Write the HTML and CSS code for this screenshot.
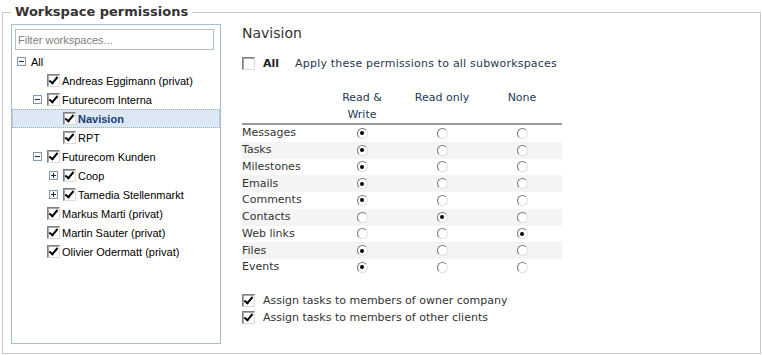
FILE: index.html
```html
<!DOCTYPE html>
<html lang="en">
<head>
  <meta charset="UTF-8">
  <meta name="viewport" content="width=device-width, initial-scale=1.0">
  <title>Workspace permissions</title>
  <link rel="stylesheet" href="styles.css">
</head>
<body>
  <fieldset class="permissions">
    <legend>Workspace permissions</legend>
    <div class="layout">
      <div class="tree-panel">
        <input type="text" class="filter" placeholder="Filter workspaces...">
        <div class="tree">
          <div class="node level-0">
            <svg class="toggle" viewBox="0 0 9 9"><rect x=".5" y=".5" width="8" height="8"/><path d="M2 4.5h5"/></svg>
            <span class="node-label">All</span>
          </div>
          <div class="node level-1">
            <span class="toggle-space"></span><span class="check on"></span>
            <span class="node-label">Andreas Eggimann (privat)</span>
          </div>
          <div class="node level-1">
            <svg class="toggle" viewBox="0 0 9 9"><rect x=".5" y=".5" width="8" height="8"/><path d="M2 4.5h5"/></svg>
            <span class="check on"></span>
            <span class="node-label">Futurecom Interna</span>
          </div>
          <div class="node level-2 selected">
            <span class="toggle-space"></span><span class="check on"></span>
            <span class="node-label">Navision</span>
          </div>
          <div class="node level-2">
            <span class="toggle-space"></span><span class="check on"></span>
            <span class="node-label">RPT</span>
          </div>
          <div class="node level-1">
            <svg class="toggle" viewBox="0 0 9 9"><rect x=".5" y=".5" width="8" height="8"/><path d="M2 4.5h5"/></svg>
            <span class="check on"></span>
            <span class="node-label">Futurecom Kunden</span>
          </div>
          <div class="node level-2">
            <svg class="toggle" viewBox="0 0 9 9"><rect x=".5" y=".5" width="8" height="8"/><path d="M2 4.5h5M4.5 2v5"/></svg>
            <span class="check on"></span>
            <span class="node-label">Coop</span>
          </div>
          <div class="node level-2">
            <svg class="toggle" viewBox="0 0 9 9"><rect x=".5" y=".5" width="8" height="8"/><path d="M2 4.5h5M4.5 2v5"/></svg>
            <span class="check on"></span>
            <span class="node-label">Tamedia Stellenmarkt</span>
          </div>
          <div class="node level-1">
            <span class="toggle-space"></span><span class="check on"></span>
            <span class="node-label">Markus Marti (privat)</span>
          </div>
          <div class="node level-1">
            <span class="toggle-space"></span><span class="check on"></span>
            <span class="node-label">Martin Sauter (privat)</span>
          </div>
          <div class="node level-1">
            <span class="toggle-space"></span><span class="check on"></span>
            <span class="node-label">Olivier Odermatt (privat)</span>
          </div>
        </div>
      </div>

      <div class="detail">
        <h2>Navision</h2>
        <div class="all-row">
          <span class="check"></span>
          <span class="all-label">All</span>
          <span class="apply-label">Apply these permissions to all subworkspaces</span>
        </div>

        <table class="perm-table">
          <thead>
            <tr>
              <th class="label-col"></th>
              <th>Read &amp;<br>Write</th>
              <th>Read only</th>
              <th>None</th>
            </tr>
          </thead>
          <tbody>
            <tr><td>Messages</td><td><span class="radio on"></span></td><td><span class="radio"></span></td><td><span class="radio"></span></td></tr>
            <tr><td>Tasks</td><td><span class="radio on"></span></td><td><span class="radio"></span></td><td><span class="radio"></span></td></tr>
            <tr><td>Milestones</td><td><span class="radio on"></span></td><td><span class="radio"></span></td><td><span class="radio"></span></td></tr>
            <tr><td>Emails</td><td><span class="radio on"></span></td><td><span class="radio"></span></td><td><span class="radio"></span></td></tr>
            <tr><td>Comments</td><td><span class="radio on"></span></td><td><span class="radio"></span></td><td><span class="radio"></span></td></tr>
            <tr><td>Contacts</td><td><span class="radio"></span></td><td><span class="radio on"></span></td><td><span class="radio"></span></td></tr>
            <tr><td>Web links</td><td><span class="radio"></span></td><td><span class="radio"></span></td><td><span class="radio on"></span></td></tr>
            <tr><td>Files</td><td><span class="radio on"></span></td><td><span class="radio"></span></td><td><span class="radio"></span></td></tr>
            <tr><td>Events</td><td><span class="radio on"></span></td><td><span class="radio"></span></td><td><span class="radio"></span></td></tr>
          </tbody>
        </table>

        <div class="options">
          <div class="option"><span class="check on"></span>Assign tasks to members of owner company</div>
          <div class="option"><span class="check on"></span>Assign tasks to members of other clients</div>
        </div>
      </div>
    </div>
  </fieldset>
</body>
</html>
```

FILE: styles.css
```css
body {
  margin: 0;
  font-family: "Liberation Sans", Arial, sans-serif;
  font-size: 11px;
  color: #000;
  background-color: #fff;
}

.permissions {
  margin: 4px 0 0 2px;
  width: 759px;
  box-sizing: border-box;
  min-width: 0;
  border: 1px solid #c8c8c8;
  padding: 4px 8px 9px 8px;
}

.permissions legend {
  font-family: "DejaVu Sans", Verdana, sans-serif;
  font-size: 13px;
  font-weight: bold;
  line-height: 16px;
  color: #333;
  padding: 0 4px;
}

.layout {
  display: flex;
  gap: 21px;
}

/* workspace tree */

.tree-panel {
  width: 210px;
  height: 320px;
  box-sizing: border-box;
  border: 1px solid #a7bfd3;
  padding-top: 4px;
}

.filter {
  display: block;
  margin-left: 3px;
  width: 199px;
  height: 21px;
  box-sizing: border-box;
  border: 1px solid #b5bcc4;
  padding: 0 2px;
  font-family: "Liberation Sans", Arial, sans-serif;
  font-size: 11px;
}

.filter::placeholder {
  color: #808080;
}

.tree {
  margin-top: 2px;
}

.node {
  display: flex;
  align-items: center;
  height: 19px;
  box-sizing: border-box;
  white-space: nowrap;
}

.node.level-0 {
  padding-left: 5px;
}

.node.level-1 {
  padding-left: 21px;
}

.node.level-2 {
  padding-left: 37px;
}

.node.selected {
  background-color: #dde8f5;
  border: 1px dotted #93aecb;
  padding-left: 36px;
}

.node.selected .node-label {
  font-weight: bold;
  color: #1b3d6e;
}

.toggle {
  width: 9px;
  height: 9px;
  margin-right: 5px;
  flex: none;
}

.toggle rect {
  fill: #f7f8fa;
  stroke: #8397ad;
}

.toggle path {
  stroke: #1f2b3a;
}

.toggle-space {
  width: 9px;
  margin-right: 5px;
  flex: none;
}

.node .check {
  margin-right: 2px;
}

/* classic checkbox and radio */

.check {
  position: relative;
  display: inline-block;
  width: 13px;
  height: 13px;
  box-sizing: border-box;
  border: 1px solid;
  border-color: #808080 #dcdcdc #dcdcdc #808080;
  box-shadow: inset 1px 1px 0 #a8a8a8;
  background-color: #fff;
  flex: none;
}

.check.on::after {
  content: "";
  position: absolute;
  left: 3px;
  top: 0;
  width: 3px;
  height: 7px;
  border: solid #000;
  border-width: 0 2px 2px 0;
  transform: rotate(40deg);
}

.radio {
  position: relative;
  display: inline-block;
  width: 11px;
  height: 11px;
  box-sizing: border-box;
  border: 1px solid;
  border-color: #7a7a7a #e0e0e0 #e0e0e0 #7a7a7a;
  border-radius: 50%;
  background-color: #fff;
  vertical-align: middle;
}

.radio.on::after {
  content: "";
  position: absolute;
  left: 2.5px;
  top: 2.5px;
  width: 4px;
  height: 4px;
  border-radius: 50%;
  background-color: #000;
}

/* permission detail */

.detail {
  font-family: "DejaVu Sans", Verdana, sans-serif;
  font-size: 11px;
  color: #333;
}

.detail h2 {
  margin: 0;
  font-size: 14px;
  font-weight: normal;
  line-height: 18px;
  color: #333;
}

.all-row {
  display: flex;
  align-items: center;
  height: 17px;
  margin-top: 13px;
}

.all-label {
  margin-left: 8px;
  font-weight: bold;
  color: #222;
}

.apply-label {
  margin-left: 16px;
  letter-spacing: 0.2px;
  color: #1e3a52;
}

.perm-table {
  margin-top: 17px;
  border-collapse: collapse;
}

.perm-table th {
  width: 80px;
  padding: 0;
  font-weight: normal;
  line-height: 17px;
  color: #1e3a52;
  vertical-align: top;
  border-bottom: 2px solid #9a9a9a;
}

.perm-table td {
  height: 16.75px;
  padding: 0;
  line-height: 16px;
  text-align: center;
}

.perm-table td:first-child {
  text-align: left;
}

.perm-table tbody tr:nth-child(even) td {
  background-color: #f4f4f4;
}

.options {
  margin-top: 16px;
}

.option {
  display: flex;
  align-items: center;
  height: 17px;
}

.option .check {
  margin-right: 8px;
}
```
